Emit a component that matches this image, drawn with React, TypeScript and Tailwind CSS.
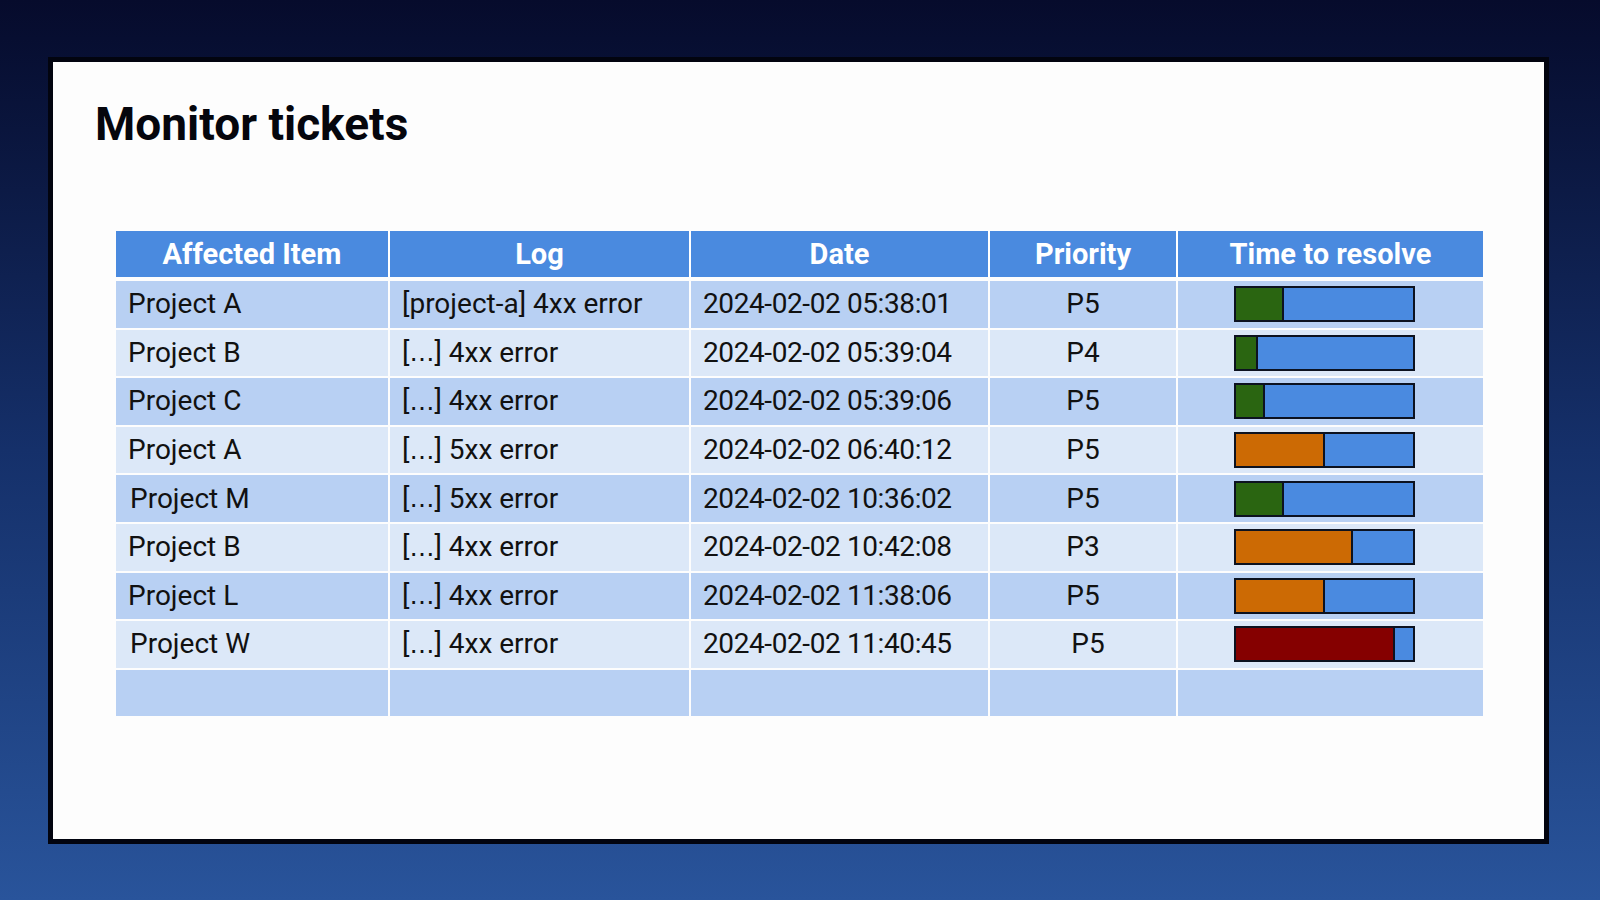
const rows = [
  { item: "Project A", log: "[project-a] 4xx error", date: "2024-02-02 05:38:01", priority: "P5", fill: "w-[48px] bg-[#2a6511]", shift: "" },
  { item: "Project B", log: "4xx error", date: "2024-02-02 05:39:04", priority: "P4", fill: "w-[22px] bg-[#2a6511]", shift: "" },
  { item: "Project C", log: "4xx error", date: "2024-02-02 05:39:06", priority: "P5", fill: "w-[29px] bg-[#2a6511]", shift: "" },
  { item: "Project A", log: "5xx error", date: "2024-02-02 06:40:12", priority: "P5", fill: "w-[89px] bg-[#cc6a04]", shift: "" },
  { item: "Project M", log: "5xx error", date: "2024-02-02 10:36:02", priority: "P5", fill: "w-[48px] bg-[#2a6511]", shift: "pl-[14px]" },
  { item: "Project B", log: "4xx error", date: "2024-02-02 10:42:08", priority: "P3", fill: "w-[117px] bg-[#cc6a04]", shift: "" },
  { item: "Project L", log: "4xx error", date: "2024-02-02 11:38:06", priority: "P5", fill: "w-[89px] bg-[#cc6a04]", shift: "" },
  { item: "Project W", log: "4xx error", date: "2024-02-02 11:40:45", priority: "P5", fill: "w-[159px] bg-[#850000]", shift: "pl-[14px]" },
];

const cols = "grid grid-cols-[272px_299px_297px_186px_305px] gap-x-[2px]";

function Bar({ fill }: { fill: string }) {
  return (
    <div className="flex h-[36px] w-[181px] border-2 border-[#0c1220] bg-[#4a8ae0]">
      <div className={`${fill} h-full border-r-2 border-[#0c1220]`} />
    </div>
  );
}

function LogText({ text }: { text: string }) {
  // the first row keeps its full prefix, the rest are shortened
  if (text.startsWith("[")) return <>{text}</>;
  return (
    <>
      [<span className="font-['DejaVu_Sans'] text-[25px]">…</span>] {text}
    </>
  );
}

function App() {
  return (
    <main className="h-[900px] w-[1600px] bg-gradient-to-b from-[#060b2c] via-[#15306a] to-[#29549b] pl-[48px] pt-[57px] font-['Roboto',sans-serif] text-[#111]">
      <section className="h-[787px] w-[1501px] border-[5px] border-[#02040f] bg-[#fdfdfd] pl-[42px] pt-[39px]">
        <h1 className="text-[46px] font-bold leading-none text-[#05060d]">Monitor tickets</h1>

        {/* ticket table */}
        <div className="ml-[21px] mt-[84px] w-[1367px]">
          <div className={`${cols} h-[45.5px] bg-white text-[29px] font-bold leading-none text-white`}>
            {["Affected Item", "Log", "Date", "Priority", "Time to resolve"].map((h) => (
              <div key={h} className="flex items-center justify-center bg-[#4a8adf] pt-[2px]">
                {h}
              </div>
            ))}
          </div>
          <div className="mt-[4.5px] flex flex-col gap-y-[2px] text-[28px] leading-none">
            {rows.map((r, i) => {
              const bg = i % 2 ? "bg-[#dce8f8]" : "bg-[#b8d0f3]";
              return (
                <div key={i} className={`${cols} h-[46.6px]`}>
                  <div className={`flex items-center ${r.shift || "pl-[12px]"} ${bg}`}>{r.item}</div>
                  <div className={`flex items-center pl-[12px] ${bg}`}>
                    <LogText text={r.log} />
                  </div>
                  <div className={`flex items-center pl-[12px] tracking-[-0.4px] ${bg}`}>{r.date}</div>
                  <div className={`flex items-center justify-center ${i === 7 ? "pl-[10px]" : ""} ${bg}`}>{r.priority}</div>
                  <div className={`flex items-center pl-[56px] ${bg}`}>
                    <Bar fill={r.fill} />
                  </div>
                </div>
              );
            })}
            <div className={`${cols} h-[46.6px]`}>
              <div className="bg-[#b8d0f3]" />
              <div className="bg-[#b8d0f3]" />
              <div className="bg-[#b8d0f3]" />
              <div className="bg-[#b8d0f3]" />
              <div className="bg-[#b8d0f3]" />
            </div>
          </div>
        </div>
      </section>
    </main>
  );
}

export default App;
